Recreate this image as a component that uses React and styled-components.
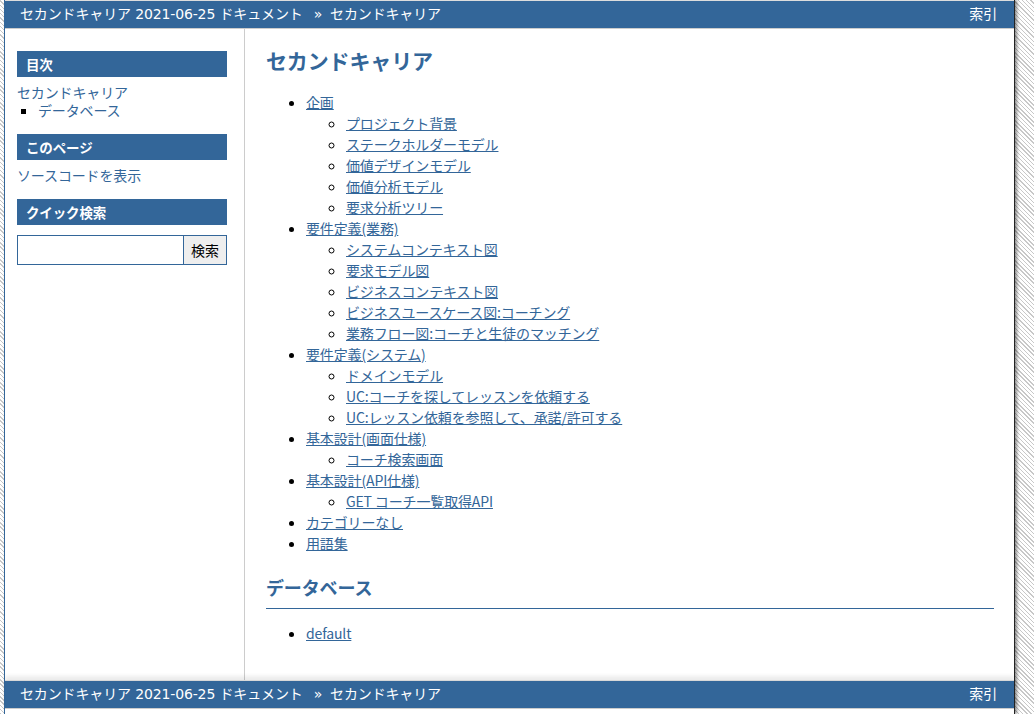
import React from "react";
import styled, { createGlobalStyle } from "styled-components";

const Global = createGlobalStyle`
  html {
    background: repeating-linear-gradient(45deg, #c8c8c8 0px, #c8c8c8 1px, #ffffff 1px, #ffffff 3px);
    min-height: 100%;
  }
  body {
    margin: 0;
    font-family: "Noto Sans CJK JP", "Noto Sans", sans-serif;
    font-size: 14px;
    letter-spacing: -0.01em;
    line-height: 150%;
    color: #000;
  }
`;

const Page = styled.div`
  margin-left: 4px;
  width: 1009px;
  min-height: 100vh;
  background: #fff;
  border-left: 1px solid #336699;
  border-right: 1px solid #222;
  box-shadow: 2px 0 3px rgba(0, 0, 0, 0.45);
  display: flex;
  flex-direction: column;
`;

const Related = styled.div`
  display: flex;
  justify-content: space-between;
  align-items: center;
  height: 27px;
  padding: 0 17px 0 15px;
  background: #336699;
  color: #fff;
  border-top: 1px solid ${(p) => (p.$footer ? "#d8d8d8" : "#dddddd")};
  border-bottom: 1px solid #cccccc;
  font-family: "DejaVu Sans", "Noto Sans CJK JP", sans-serif;
  font-size: 14px;
  white-space: nowrap;
  ${(p) => (p.$footer ? "box-shadow: 0 -4px 4px rgba(0,0,0,0.08);" : "")}
`;

const Crumbs = styled.div`
  display: flex;
  gap: 8px;
`;

const NavLink = styled.span`
  color: #fff;
`;

const Sep = styled.span`
  margin-left: 3px;
`;

const Document = styled.div`
  display: flex;
  align-items: stretch;
`;

const Sidebar = styled.aside`
  width: 240px;
  flex: none;
  box-sizing: border-box;
  border-right: 1px solid #cccccc;
  padding: 22px 17px 0 12px;
`;

const SideHeading = styled.h3`
  margin: 0;
  height: 26px;
  line-height: 26px;
  padding-left: 9px;
  background: #336699;
  color: #fff;
  font-size: 13.5px;
  font-weight: bold;
`;

const SideBlock = styled.div`
  margin-bottom: 15px;
`;

const SideList = styled.ul`
  list-style: none;
  margin: 6px 0 0;
  padding: 0;
  line-height: 18px;
`;

const SideSubList = styled.ul`
  list-style: square;
  margin: 0 0 0 21px;
  padding: 0;
`;

const SideLink = styled.a`
  color: #336699;
  text-decoration: none;
`;

const SearchForm = styled.form`
  display: flex;
  margin-top: 10px;
  height: 30px;
  box-sizing: border-box;
  border: 1px solid #336699;
`;

const SearchInput = styled.input`
  flex: 1;
  min-width: 0;
  border: none;
  border-right: 1px solid #336699;
  margin: 0;
  padding: 0 4px;
  font: inherit;
  outline: none;
`;

const SearchButton = styled.button`
  width: 42px;
  border: none;
  margin: 0;
  padding: 0;
  background: #eeeeee;
  color: #000;
  font-family: "Noto Sans CJK JP", sans-serif;
  font-size: 14px;
`;

const Main = styled.main`
  flex: 1;
  padding: 0 20px 22px 21px;
`;

const H1 = styled.h1`
  margin: 16px 0 0;
  font-size: 21px;
  line-height: 30px;
  color: #336699;
  font-weight: bold;
`;

const H2 = styled.h2`
  margin: 20px 0 0;
  font-size: 18px;
  line-height: 27px;
  padding-bottom: 7px;
  color: #336699;
  font-weight: bold;
  border-bottom: 1px solid #336699;
`;

const List = styled.ul`
  margin: ${(p) => p.$top || "17px"} 0 14px;
  padding-left: 40px;
  line-height: 21px;
  list-style: disc;
`;

const SubList = styled.ul`
  margin: 0;
  padding-left: 40px;
  list-style: circle;
`;

const Link = styled.a`
  color: #336699;
  text-decoration: underline;
`;

const toc = [
  ["企画", ["プロジェクト背景", "ステークホルダーモデル", "価値デザインモデル", "価値分析モデル", "要求分析ツリー"]],
  ["要件定義(業務)", ["システムコンテキスト図", "要求モデル図", "ビジネスコンテキスト図", "ビジネスユースケース図:コーチング", "業務フロー図:コーチと生徒のマッチング"]],
  ["要件定義(システム)", ["ドメインモデル", "UC:コーチを探してレッスンを依頼する", "UC:レッスン依頼を参照して、承諾/許可する"]],
  ["基本設計(画面仕様)", ["コーチ検索画面"]],
  ["基本設計(API仕様)", ["GET コーチ一覧取得API"]],
  ["カテゴリーなし", []],
  ["用語集", []],
];

function Bar({ footer }) {
  return (
    <Related $footer={footer}>
      <Crumbs>
        <NavLink>セカンドキャリア 2021-06-25 ドキュメント</NavLink>
        <Sep>»</Sep>
        <NavLink>セカンドキャリア</NavLink>
      </Crumbs>
      <NavLink>索引</NavLink>
    </Related>
  );
}

export default function App() {
  return (
    <>
      <Global />
      <Page>
        <Bar />
        <Document>
          <Sidebar>
            <SideBlock>
              <SideHeading>目次</SideHeading>
              <SideList>
                <li>
                  <SideLink href="#">セカンドキャリア</SideLink>
                  <SideSubList>
                    <li>
                      <SideLink href="#">データベース</SideLink>
                    </li>
                  </SideSubList>
                </li>
              </SideList>
            </SideBlock>
            <SideBlock>
              <SideHeading>このページ</SideHeading>
              <SideList>
                <li>
                  <SideLink href="#">ソースコードを表示</SideLink>
                </li>
              </SideList>
            </SideBlock>
            <SideBlock>
              <SideHeading>クイック検索</SideHeading>
              <SearchForm onSubmit={(e) => e.preventDefault()}>
                <SearchInput type="text" />
                <SearchButton type="submit">検索</SearchButton>
              </SearchForm>
            </SideBlock>
          </Sidebar>
          <Main>
            <H1>セカンドキャリア</H1>
            <List>
              {toc.map(([title, subs]) => (
                <li key={title}>
                  <Link href="#">{title}</Link>
                  {subs.length > 0 && (
                    <SubList>
                      {subs.map((s) => (
                        <li key={s}>
                          <Link href="#">{s}</Link>
                        </li>
                      ))}
                    </SubList>
                  )}
                </li>
              ))}
            </List>
            <H2>データベース</H2>
            <List $top="14px">
              <li>
                <Link href="#">default</Link>
              </li>
            </List>
          </Main>
        </Document>
        <Bar footer />
      </Page>
    </>
  );
}
